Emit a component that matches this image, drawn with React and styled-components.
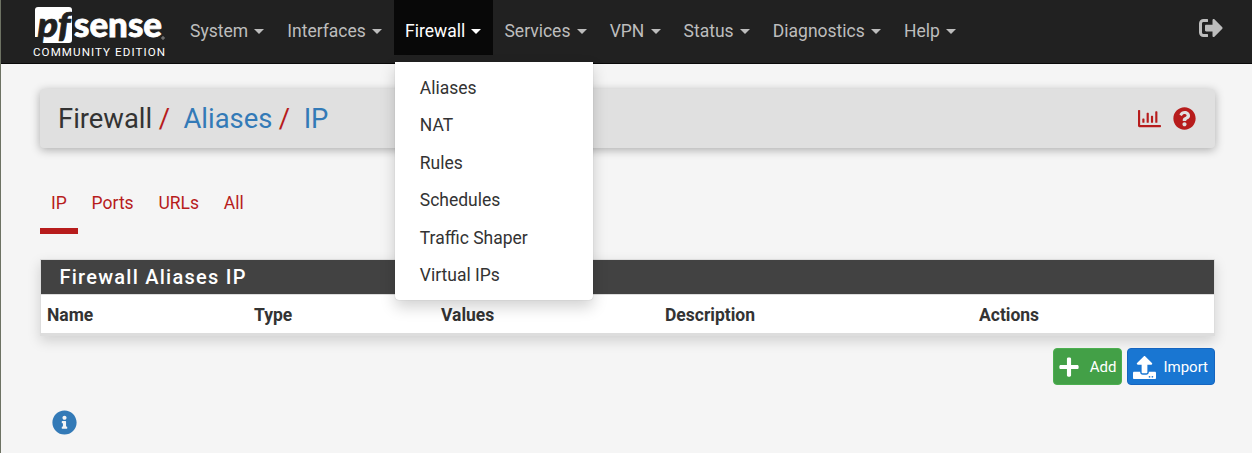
import React from "react";
import styled, { createGlobalStyle } from "styled-components";
import { FaSignOutAlt, FaRegChartBar, FaQuestionCircle, FaPlus, FaUpload, FaInfoCircle } from "react-icons/fa";

const GlobalStyle = createGlobalStyle`
  *, *::before, *::after { box-sizing: border-box; }
  html { background: #f5f5f5; }
  body {
    margin: 0;
    background: #f5f5f5;
    color: #333;
    font-family: Roboto, "Liberation Sans", sans-serif;
    font-size: 17.5px;
    line-height: 25px;
    overflow: hidden;
  }
  a { color: inherit; text-decoration: none; }
`;

const Page = styled.div`
  height: 453px;
  border-left: 1px solid #6d7263;
  overflow: hidden;
`;

const Navbar = styled.nav`
  height: 64px;
  display: flex;
  align-items: flex-start;
  background: #212121;
  border-bottom: 1px solid #090909;
  padding: 0 29px 0 32px;
`;

const Brand = styled.a`
  width: 145.7px;
  padding-top: 7px;
  display: flex;
  flex-direction: column;
  color: #fff;
`;

const Logo = styled.svg`
  display: block;
  width: 134px;
  height: 37px;
  overflow: visible;
`;

const Edition = styled.span`
  font-size: 11.6px;
  font-weight: 400;
  line-height: 14px;
  letter-spacing: 1.07px;
  padding-top: 1px;
  white-space: nowrap;
`;

const Menu = styled.ul`
  display: flex;
  list-style: none;
  margin: 0;
  padding: 0;
`;

const MenuItem = styled.li`
  position: relative;
  height: 55px;
  padding: 19px 11.7px 0 11.3px;
  white-space: nowrap;
  color: ${(p) => (p.$open ? "#fff" : "#bdbdbd")};
  background: ${(p) => (p.$open ? "#080808" : "transparent")};
`;

const Caret = styled.span`
  display: inline-block;
  margin: 0 0 2px 6.25px;
  vertical-align: middle;
  border: 5px solid transparent;
  border-top-color: currentColor;
  border-bottom: 0;
`;

const Dropdown = styled.ul`
  position: absolute;
  top: 62px;
  left: 1px;
  z-index: 5;
  width: 198px;
  margin: 0;
  padding: 7px 0 6px;
  list-style: none;
  background: #fff;
  color: #333;
  border-radius: 0 0 4px 4px;
  box-shadow: 0 7px 15px rgba(0, 0, 0, 0.18), 0 0 1px rgba(0, 0, 0, 0.3);
`;

const DropdownItem = styled.li`
  height: 37.5px;
  padding: 6.6px 25px 0;
`;

const Logout = styled.a`
  margin: 16px 0 0 auto;
  color: #bdbdbd;
  font-size: 24px;
  line-height: 0;
`;

const Content = styled.main`
  padding: 25px 37px 0 39px;
`;

const PageHeader = styled.header`
  height: 59px;
  display: flex;
  align-items: center;
  justify-content: space-between;
  padding: 0 19px 0 18px;
  background: #e0e0e0;
  border-radius: 4px;
  box-shadow: 0 2px 10px rgba(0, 0, 0, 0.3);
`;

const Breadcrumb = styled.ol`
  display: flex;
  list-style: none;
  margin: 0;
  padding: 1px 0 0;
  font-size: 27.4px;
`;

const Crumb = styled.li`
  color: ${(p) => (p.$link ? "#337ab7" : "#333")};
  &:not(:first-child)::before {
    content: "/";
    color: #b71c1c;
    padding: 0 13.5px 0 6.5px;
  }
`;

const HeaderIcons = styled.div`
  display: flex;
  align-items: center;
  gap: 12px;
  color: #b71c1c;
  font-size: 23px;
`;

const Tabs = styled.ul`
  display: flex;
  list-style: none;
  margin: 37px 0 0;
  padding: 0;
  color: #b71c1c;
`;

const Tab = styled.li`
  height: 49px;
  padding: 6px 11px 0;
  margin-right: 2.8px;
  border-bottom: 6px solid ${(p) => (p.$active ? "#b71c1c" : "transparent")};
`;

const Panel = styled.section`
  margin-top: 25px;
  border: 1px solid #ddd;
  border-bottom: 3px solid #ddd;
  background: #fff;
  box-shadow: 0 5px 12px rgba(0, 0, 0, 0.15);
`;

const PanelTitle = styled.h2`
  height: 35px;
  margin: 0;
  padding: 4px 18.5px;
  font-size: 20px;
  font-weight: 500;
  letter-spacing: 1.25px;
  line-height: 26px;
  color: #fff;
  background: #424242;
  border-bottom: 1px solid #ddd;
`;

const HeaderRow = styled.div`
  display: grid;
  grid-template-columns: 207px 187px 224px 314px 1fr;
  height: 38px;
  padding: 8px 6px 0;
  font-weight: 700;
`;

const Actions = styled.div`
  display: flex;
  justify-content: flex-end;
  gap: 5px;
  margin-top: 12px;
`;

const Button = styled.button`
  display: flex;
  align-items: center;
  gap: ${(p) => p.$gap}px;
  height: 37px;
  padding: 1px ${(p) => (p.$blue ? 6 : 4.5)}px 0 ${(p) => (p.$blue ? 5 : 3.5)}px;
  border: 1px solid ${(p) => (p.$blue ? "#1565c0" : "#4caf50")};
  border-radius: 4px;
  background: ${(p) => (p.$blue ? "#1976d2" : "#43a047")};
  color: #fff;
  font: 400 15px/23px Roboto, sans-serif;
`;

const Info = styled.div`
  margin: 25px 0 0 12px;
  color: #337ab7;
  font-size: 25px;
  line-height: 0;
`;

const MENUS = ["System", "Interfaces", "Firewall", "Services", "VPN", "Status", "Diagnostics", "Help"];
const FIREWALL = ["Aliases", "NAT", "Rules", "Schedules", "Traffic Shaper", "Virtual IPs"];

function PfLogo() {
  return (
    <Logo viewBox="0 0 134 37">
      <path fill="#fff" d="M5 0H36Q39 0 39 3V33Q39 36 36 36H6L7.5 30H2V3Q2 0 5 0Z" />
      <g fontFamily="Lato, sans-serif" fontWeight="900">
        <text x="4.5" y="29.5" fontSize="34" fontStyle="italic" fill="#212121" stroke="#212121" strokeWidth=".7" textLength="33" lengthAdjust="spacingAndGlyphs">pf</text>
        <text x="41" y="30" fontSize="35" fill="#fff" stroke="#fff" strokeWidth=".8" textLength="88" lengthAdjust="spacingAndGlyphs">sense</text>
      </g>
      <circle cx="130" cy="31" r="1.2" fill="none" stroke="#bbb" strokeWidth=".7" />
    </Logo>
  );
}

export default function App() {
  return (
    <Page>
      <GlobalStyle />
      <Navbar>
        <Brand href="#">
          <PfLogo />
          <Edition>COMMUNITY EDITION</Edition>
        </Brand>
        <Menu>
          {MENUS.map((m) => (
            <MenuItem key={m} $open={m === "Firewall"}>
              {m}
              <Caret />
              {m === "Firewall" && (
                <Dropdown>
                  {FIREWALL.map((f) => (
                    <DropdownItem key={f}>{f}</DropdownItem>
                  ))}
                </Dropdown>
              )}
            </MenuItem>
          ))}
        </Menu>
        <Logout href="#"><FaSignOutAlt /></Logout>
      </Navbar>
      <Content>
        <PageHeader>
          <Breadcrumb>
            <Crumb>Firewall</Crumb>
            <Crumb $link>Aliases</Crumb>
            <Crumb $link>IP</Crumb>
          </Breadcrumb>
          <HeaderIcons>
            <FaRegChartBar />
            <FaQuestionCircle />
          </HeaderIcons>
        </PageHeader>
        <Tabs>
          <Tab $active>IP</Tab>
          <Tab>Ports</Tab>
          <Tab>URLs</Tab>
          <Tab>All</Tab>
        </Tabs>
        <Panel>
          <PanelTitle>Firewall Aliases IP</PanelTitle>
          <HeaderRow>
            <span>Name</span>
            <span>Type</span>
            <span>Values</span>
            <span>Description</span>
            <span>Actions</span>
          </HeaderRow>
        </Panel>
        <Actions>
          <Button $gap={10}><FaPlus size={22} />Add</Button>
          <Button $blue $gap={7.5}><FaUpload size={23} />Import</Button>
        </Actions>
        <Info><FaInfoCircle /></Info>
      </Content>
    </Page>
  );
}
